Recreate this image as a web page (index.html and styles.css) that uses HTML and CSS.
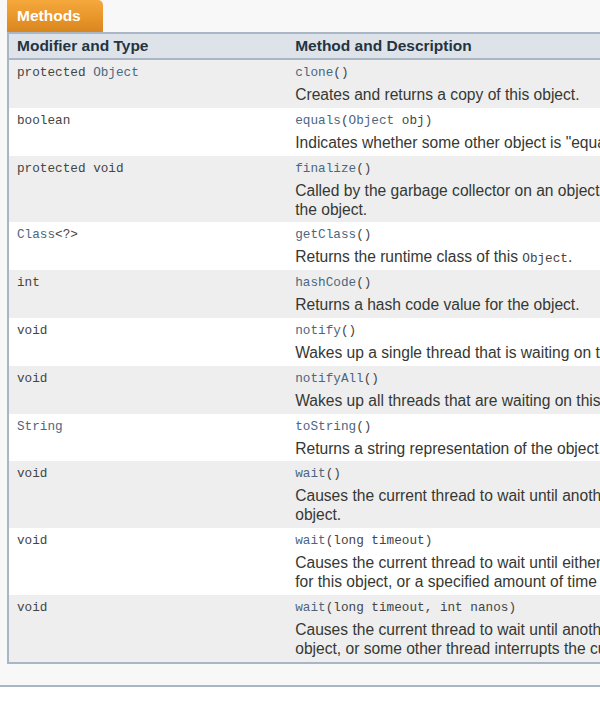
FILE: index.html
```html
<!DOCTYPE html>
<html>
<head>
<meta charset="utf-8">
<link rel="stylesheet" href="styles.css">
</head>
<body>
<div class="summary">
  <div class="tab">Methods</div>
  <table class="members">
    <colgroup><col class="c1"><col class="c2"></colgroup>
    <thead>
      <tr><th>Modifier and Type</th><th>Method and Description</th></tr>
    </thead>
    <tbody>
      <tr class="alt">
        <td><code>protected <span class="link">Object</span></code></td>
        <td><code><span class="link">clone</span>()</code><div class="block">Creates and returns a copy of this object.</div></td>
      </tr>
      <tr>
        <td><code>boolean</code></td>
        <td><code><span class="link">equals</span>(<span class="link">Object</span> obj)</code><div class="block">Indicates whether some other object is "equal to" this one.</div></td>
      </tr>
      <tr class="alt">
        <td><code>protected void</code></td>
        <td><code><span class="link">finalize</span>()</code><div class="block">Called by the garbage collector on an object when garbage collection determines that there are no more references to<br>the object.</div></td>
      </tr>
      <tr>
        <td><code><span class="link">Class</span>&lt;?&gt;</code></td>
        <td><code><span class="link">getClass</span>()</code><div class="block">Returns the runtime class of this <code>Object</code>.</div></td>
      </tr>
      <tr class="alt">
        <td><code>int</code></td>
        <td><code><span class="link">hashCode</span>()</code><div class="block">Returns a hash code value for the object.</div></td>
      </tr>
      <tr>
        <td><code>void</code></td>
        <td><code><span class="link">notify</span>()</code><div class="block">Wakes up a single thread that is waiting on this object's monitor.</div></td>
      </tr>
      <tr class="alt">
        <td><code>void</code></td>
        <td><code><span class="link">notifyAll</span>()</code><div class="block">Wakes up all threads that are waiting on this object's monitor.</div></td>
      </tr>
      <tr>
        <td><code><span class="link">String</span></code></td>
        <td><code><span class="link">toString</span>()</code><div class="block">Returns a string representation of the object.</div></td>
      </tr>
      <tr class="alt">
        <td><code>void</code></td>
        <td><code><span class="link">wait</span>()</code><div class="block">Causes the current thread to wait until another thread invokes the <code>notify()</code> method or the <code>notifyAll()</code> method for this<br>object.</div></td>
      </tr>
      <tr>
        <td><code>void</code></td>
        <td><code><span class="link">wait</span>(long&nbsp;timeout)</code><div class="block">Causes the current thread to wait until either another thread invokes the <code>notify()</code> method or the <code>notifyAll()</code> method<br>for this object, or a specified amount of time has elapsed.</div></td>
      </tr>
      <tr class="alt">
        <td><code>void</code></td>
        <td><code><span class="link">wait</span>(long&nbsp;timeout, int&nbsp;nanos)</code><div class="block">Causes the current thread to wait until another thread invokes the <code>notify()</code> method or the <code>notifyAll()</code> method for this<br>object, or some other thread interrupts the current thread, or a certain amount of real time has elapsed.</div></td>
      </tr>
    </tbody>
  </table>
</div>
</body>
</html>
```

FILE: styles.css
```css
html, body {
  margin: 0;
  padding: 0;
  overflow: hidden;
  background: #ffffff;
}

body {
  font-family: "Liberation Sans", Arial, sans-serif;
  font-size: 15.6px;
  color: #353833;
}

.summary {
  background: #f8f8f8;
  padding: 0 0 21px 7px;
  border-bottom: 2px solid #a9b6c6;
}

.tab {
  width: 86px;
  height: 32px;
  padding-left: 10px;
  box-sizing: content-box;
  background: linear-gradient(#f5a83c, #e8962a 55%, #d8861f);
  border-radius: 0 5px 0 0;
  color: #ffffff;
  font-weight: bold;
  font-size: 15.5px;
  line-height: 32px;
}

.members {
  border-collapse: collapse;
  table-layout: fixed;
  width: 1300px;
  border-left: 2px solid #a9b6c6;
  border-bottom: 2px solid #a9b6c6;
}

.c1 { width: 279px; }
.c2 { width: 1019px; }

.members th {
  background: #dee3e9;
  border-top: 2px solid #a9b6c6;
  border-bottom: 2px solid #a9b6c6;
  text-align: left;
  font-weight: bold;
  font-size: 15.5px;
  color: #253441;
  height: 24px;
  line-height: 24px;
  padding: 0 0 0 8px;
}

.members td {
  vertical-align: top;
  padding: 4px 0 3.8px 8px;
  background: #ffffff;
}

.members tr.alt td {
  background: #eeeeee;
}

code {
  font-family: "Liberation Mono", "Courier New", monospace;
  font-size: 12.7px;
  line-height: 18px;
  display: block;
  color: #444444;
}

.block code {
  display: inline;
  line-height: 0;
}

.link {
  color: #4a6782;
}

.block {
  margin-top: 3px;
  line-height: 19px;
  font-size: 15.6px;
  white-space: nowrap;
  color: #353833;
}
```
